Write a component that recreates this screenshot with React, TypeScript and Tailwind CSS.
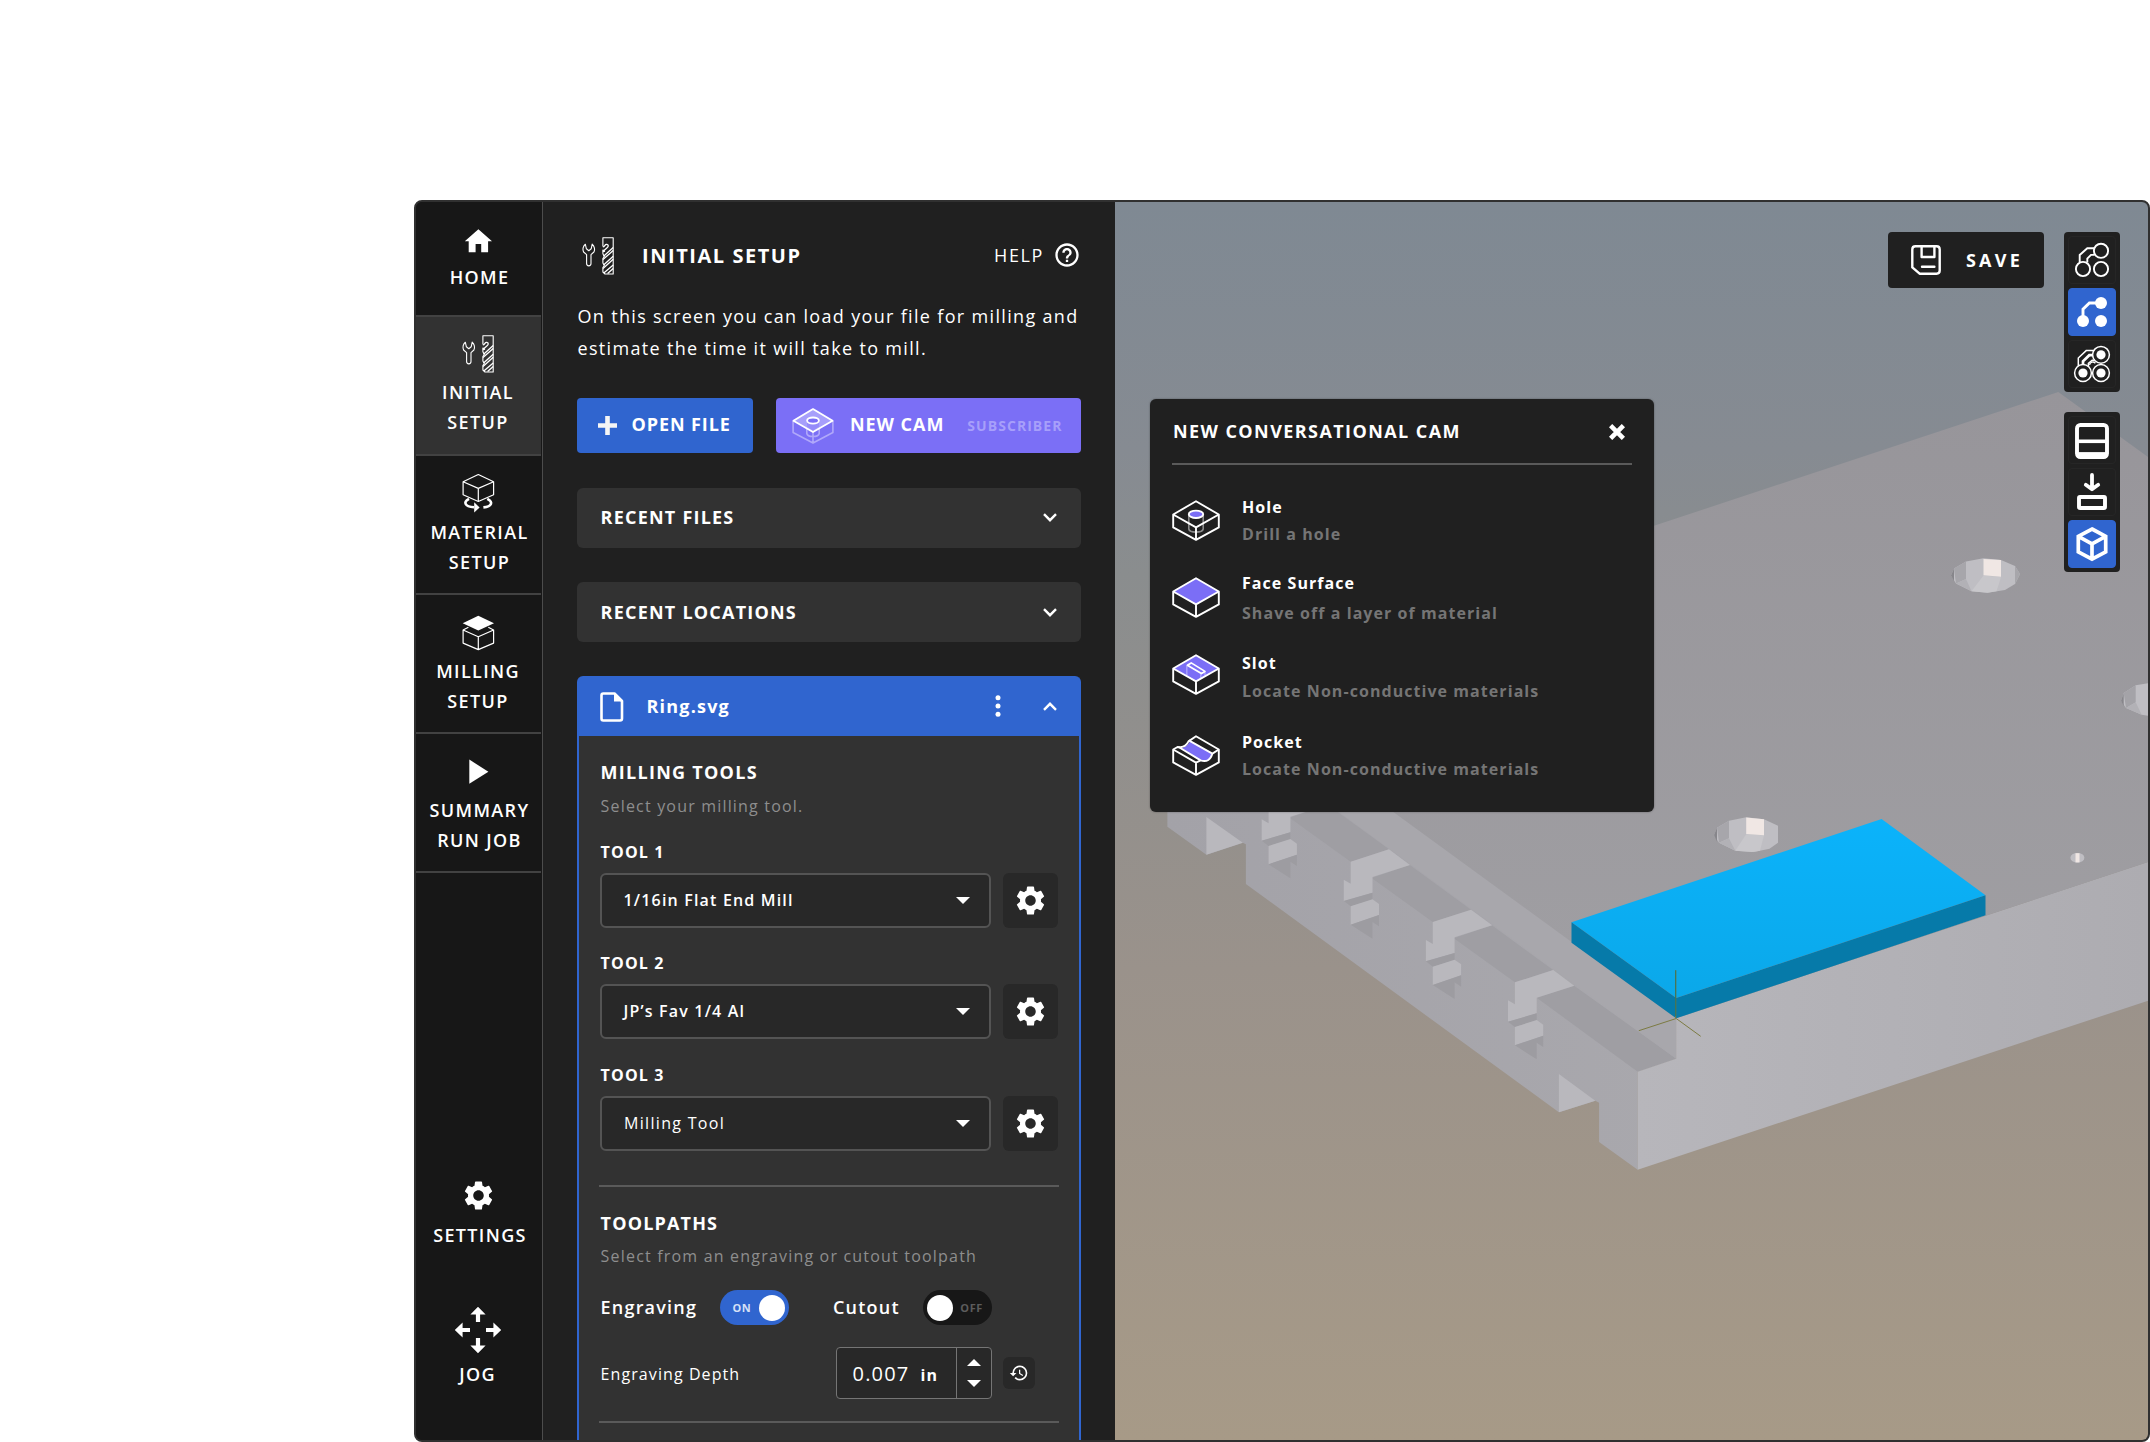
import type { ReactNode } from "react";
import { MdHelpOutline, MdHistory, MdSettings } from "react-icons/md";

/* ---------- Icons ---------- */

function MillToolsIcon({ className = "" }: { className?: string }) {
  return (
    <svg viewBox="0 0 47 47" width="47" height="47" className={className} fill="none" stroke="#fff" strokeWidth="1.1" strokeLinejoin="round">
      <path d="M10.3 12.2 C8 14 7.4 17.6 8.6 20 L11.6 22.6 V31.6 C11.6 34.6 16 34.6 16 31.6 V22.6 L18.9 20 C20.2 17.6 19.4 14 17.2 12.2 L16.2 16.8 L13.8 18.7 L11.4 16.8 Z" />
      <path d="M27.9 14.5 V5.8 H38.2 V42 H30 L27.9 40 V35.5 L29.3 33.5 L27.9 31 V26.5 L29.3 24.5 L27.9 21.8 V18 L30 19.5" />
      <path d="M27.9 14.8 C30 14.8 29.6 12 31.8 12.4 C34 13 33.4 14.8 31.8 16 L27.9 19.4 M28.6 24.2 L38.2 15.6 M28 27.6 L38.2 18.4 M28.6 33 L38.2 24.2 M28 36.4 L38.2 27.2 M28.8 41 L38.2 33 M32.6 41.6 L38.2 36.4" strokeWidth="1.3" />
    </svg>
  );
}

function HomeIcon() {
  return (
    <svg viewBox="0 0 47 47" width="47" height="47" fill="#fff">
      <path d="M23.4 13.2 L37 25.2 H33.1 V36.2 H26.2 V28 H20.6 V36.2 H13.7 V25.2 H9.8 Z" />
    </svg>
  );
}

function MaterialIcon() {
  return (
    <svg viewBox="0 0 47 47" width="47" height="47" fill="none" stroke="#fff" strokeWidth="1.2" strokeLinejoin="round">
      <path d="M23.3 5.5 L38.6 12.7 V25.7 L23.3 32.5 L8.1 25.7 V12.7 Z M8.1 12.7 L23.3 19.4 L38.6 12.7 M23.3 19.4 V32.5" />
      <path d="M14 29.8 C8 33 9.5 37.6 19 38.3" strokeWidth="2.6" />
      <path d="M32.3 29.8 C38.5 33 37 37.6 28.4 38.4" strokeWidth="2.6" />
      <path d="M19.2 33.3 L24.6 38.4 L19.2 43.6 Z" fill="#fff" stroke="none" />
    </svg>
  );
}

function MillingIcon() {
  return (
    <svg viewBox="0 0 47 47" width="47" height="47" fill="none" stroke="#fff" strokeWidth="1.2" strokeLinejoin="round">
      <path d="M23.3 7.7 L39 15.3 L23.3 22.4 L7.7 15.3 Z" fill="#fff" stroke="none" />
      <path d="M13.4 19.3 L8.1 22 V35.1 L23.3 41.6 L38.6 35.1 V22 L33.3 19.3 M8.1 22 L23.3 28.8 L38.6 22 M23.3 28.8 V41.6" />
    </svg>
  );
}

function PlayIcon() {
  return (
    <svg viewBox="0 0 47 47" width="47" height="47" fill="#fff">
      <path d="M14.3 12.6 L33.4 24.7 L14.3 36.8 Z" />
    </svg>
  );
}

function JogIcon() {
  const arrow = "M0 -23.2 L7.6 -15.4 H2.1 V-8 H-2.1 V-15.4 H-7.6 Z";
  return (
    <svg viewBox="-24 -24 48 48" width="48" height="48" fill="#fff">
      <path d={arrow} />
      <path d={arrow} transform="rotate(90)" />
      <path d={arrow} transform="rotate(180)" />
      <path d={arrow} transform="rotate(270)" />
    </svg>
  );
}

function Chevron({ up = false }: { up?: boolean }) {
  return (
    <svg viewBox="0 0 14 9" width="14" height="9" fill="none" stroke="#fff" strokeWidth="2.4">
      <path d={up ? "M1 7.8 L7 1.8 L13 7.8" : "M1 1.2 L7 7.2 L13 1.2"} />
    </svg>
  );
}

function Caret({ up = false }: { up?: boolean }) {
  return (
    <svg viewBox="0 0 14 7" width="14" height="7" fill="#fff">
      <path d={up ? "M0 7 L7 0 L14 7 Z" : "M0 0 H14 L7 7 Z"} />
    </svg>
  );
}

const CUBE = "M24 1.3 L46.8 14.5 V27.4 L24 39.8 L1.2 27.4 V14.5 Z M1.2 14.5 L24 27.4 L46.8 14.5 M24 27.4 V39.8";

function HoleIcon() {
  return (
    <svg viewBox="0 0 48 41" width="48" height="41" fill="none" stroke="#fff" strokeWidth="1.9" strokeLinejoin="round">
      <path d="M16.8 14.5 V29 C17.6 33.2 30.4 33.2 31.2 29 V14.5" stroke="#8a8a8a" strokeWidth="1.6" />
      <path d={CUBE} />
      <ellipse cx="24" cy="14.3" rx="7.2" ry="3.7" fill="#7b6ef6" />
    </svg>
  );
}

function FaceIcon() {
  return (
    <svg viewBox="0 0 48 41" width="48" height="41" fill="none" stroke="#fff" strokeWidth="1.9" strokeLinejoin="round">
      <path d="M24 1.3 L46.8 14.5 L24 27.4 L1.2 14.5 Z" fill="#7b6ef6" stroke="none" />
      <path d={CUBE} />
    </svg>
  );
}

function SlotIcon() {
  return (
    <svg viewBox="0 0 48 41" width="48" height="41" fill="none" stroke="#fff" strokeWidth="1.9" strokeLinejoin="round">
      <path d="M24 1.3 L46.8 14.5 L24 27.4 L1.2 14.5 Z" fill="#7b6ef6" stroke="none" />
      <path d="M14.8 11.5 V21.5 M33 18.5 V21.6 M28.8 20 V24" stroke="#a9a0fb" strokeWidth="1.5" />
      <path d={CUBE} />
      <path d="M19.2 8.9 L33 17.4 L29.4 19.6 L15.4 11.2 Z" strokeWidth="1.7" />
    </svg>
  );
}

function PocketIcon() {
  return (
    <svg viewBox="0 0 48 41" width="48" height="41" fill="none" stroke="#fff" strokeWidth="1.9" strokeLinejoin="round">
      <path d="M18.2 6.2 L40 18.8 C38.5 24 36 27.5 28.5 25.5 L8.5 13.2 C14 12.5 15.5 9.5 18.2 6.2 Z" fill="#7b6ef6" stroke="none" />
      <path d="M24 1.3 L46.8 14.5 V27.4 L24 39.8 L1.2 27.4 V14.5 L5.5 12 L8.5 12.2 C13.5 12 15 9.5 16.5 6.4 Z" />
      <path d="M16.8 5.4 L40.4 18.6 L46.8 14.5 M40.4 18.6 C38.8 24.5 35 27.4 28.6 25.4 L7 12.2 M1.2 14.5 L24 27.6 L28.6 25.4 M24 27.6 V39.8" />
    </svg>
  );
}

function NewCamIcon() {
  return (
    <svg viewBox="0 0 42 36" width="42" height="36" fill="none" stroke="#fff" strokeWidth="1.8" strokeLinejoin="round">
      <path d="M1.1 13 V24.5 L21 35 L40.9 24.5 V13 M21 24 V35 M14.8 14 V25.5 C15.5 29.5 26.5 29.5 27.2 25.5 V14" stroke="#b0a8fa" strokeWidth="1.6" />
      <path d="M21 1.1 L40.6 12.8 L21 24 L1.4 12.8 Z" fill="#a79ffb" />
      <path d="M15.1 13 V18.8 L21 22.4 L26.9 18.8 V13 Z" fill="#958bf9" stroke="none" />
      <ellipse cx="21" cy="12.6" rx="5.9" ry="3.1" fill="#7b6ef6" />
    </svg>
  );
}

function SaveIcon() {
  return (
    <svg viewBox="0 0 30 30" width="30" height="30" fill="none" stroke="#fff" strokeWidth="2.4" strokeLinejoin="round" strokeLinecap="round">
      <path d="M4.5 1.3 H25.5 Q28.7 1.3 28.7 4.5 V25.5 Q28.7 28.7 25.5 28.7 H8.6 L1.3 22.4 V4.5 Q1.3 1.3 4.5 1.3 Z" />
      <path d="M10.6 1.8 V12 H23.4 V1.8 M11 21.7 H23.4" />
    </svg>
  );
}

/* ---------- Left navigation ---------- */

function NavItem({ icon, lines, active = false, className, textClass }: { icon: ReactNode; lines: string[]; active?: boolean; className: string; textClass: string }) {
  return (
    <div className={`flex shrink-0 flex-col items-center border-b-2 border-[#424242] text-[18px] font-semibold leading-[30px] tracking-[1.35px] ${active ? "bg-[#323232]" : ""} ${className}`}>
      <div className="h-[47px] w-[47px]">{icon}</div>
      <div className={`flex flex-col items-center ${textClass}`}>
        {lines.map((l) => (
          <span key={l}>{l}</span>
        ))}
      </div>
    </div>
  );
}

function Sidebar() {
  return (
    <nav className="flex w-[127px] shrink-0 flex-col border-r border-[#4c4c4c] bg-[#171717] pr-px">
      <NavItem icon={<HomeIcon />} lines={["HOME"]} className="h-[115px] pt-[14px]" textClass="-mt-px pl-[2px]" />
      <NavItem icon={<MillToolsIcon />} lines={["INITIAL", "SETUP"]} active className="h-[139px] pt-[13px]" textClass="pr-px" />
      <NavItem icon={<MaterialIcon />} lines={["MATERIAL", "SETUP"]} className="h-[139px] pt-[13px]" textClass="mt-px pl-[2px]" />
      <NavItem icon={<MillingIcon />} lines={["MILLING", "SETUP"]} className="h-[139px] pt-[13px]" textClass="mt-px pr-px" />
      <NavItem icon={<PlayIcon />} lines={["SUMMARY", "RUN JOB"]} className="h-[139px] pt-[13px]" textClass="mt-px pl-[2px]" />
      <div className="mt-auto flex flex-col items-center pb-[51px] text-[18px] font-semibold leading-[30px] tracking-[1.35px]">
        <MdSettings size={35} color="#fff" />
        <span className="mt-[7px] pl-[3px]">SETTINGS</span>
        <div className="mt-[56px] mb-[5px] pr-px"><JogIcon /></div>
        <span className="pr-[2px]">JOG</span>
      </div>
    </nav>
  );
}

/* ---------- Setup panel ---------- */

function Accordion({ title, className }: { title: string; className: string }) {
  return (
    <div className={`flex h-[60px] shrink-0 items-center justify-between rounded-md bg-[#323232] pl-[23.6px] pr-[24px] ${className}`}>
      <span className="text-[18px] font-bold tracking-[1.22px]">{title}</span>
      <Chevron />
    </div>
  );
}

function ToolSelect({ label, value, placeholder = false }: { label: string; value: string; placeholder?: boolean }) {
  return (
    <div>
      <div className="pt-px pl-[0.6px] text-[16px] font-bold leading-6 tracking-[1.15px]">{label}</div>
      <div className="mt-[9px] flex gap-3">
        <div className="flex h-[55px] w-[391px] items-center justify-between rounded-[6px] border-2 border-[#545454] bg-[#282828] pl-[21.5px] pr-[19px]">
          <span className={placeholder ? "pb-px pl-[0.6px] text-[16px] tracking-[1.3px]" : "pb-px text-[16px] font-semibold tracking-[1.18px]"}>{value}</span>
          <Caret />
        </div>
        <div className="flex h-[55px] w-[55px] items-center justify-center rounded-[6px] bg-[#282828]">
          <MdSettings size={35} color="#fff" />
        </div>
      </div>
    </div>
  );
}

function Toggle({ on }: { on: boolean }) {
  return (
    <div className={`flex h-[35px] w-[69px] items-center justify-between rounded-full px-[4.5px] text-[11px] font-bold ${on ? "bg-[#3065cf] pl-[12.5px]" : "bg-[#171717] pr-[8.5px]"}`}>
      {on && <span className="pt-[2px] tracking-[0.6px] text-[#d5e0f6]">ON</span>}
      <span className="h-[26px] w-[26px] rounded-full bg-white" />
      {!on && <span className="pt-[2px] tracking-[0.6px] text-[#5c5c5c]">OFF</span>}
    </div>
  );
}

function Rule() {
  return <div className="-ml-px h-[2px] w-[460px] bg-[#5a5a5a]" />;
}

function SetupPanel() {
  return (
    <section className="flex w-[572px] shrink-0 flex-col overflow-hidden bg-[#202020] pl-[34px] pr-[34px]">
      <div className="mt-[33px] flex h-10 shrink-0 items-center">
        <MillToolsIcon className="-ml-[2.5px]" />
        <h1 className="ml-[20.5px] pt-[1px] text-[20px] font-bold leading-8 tracking-[1.55px]">INITIAL SETUP</h1>
        <span className="ml-auto pt-px text-[18px] tracking-[1.6px]">HELP</span>
        <MdHelpOutline size={28} color="#fff" className="ml-[9px]" />
      </div>
      <p className="mt-[25px] whitespace-nowrap pl-[0.5px] text-[18px] leading-8 tracking-[1.33px]">
        On this screen you can load your file for milling and
        <br />
        estimate the time it will take to mill.
      </p>
      <div className="mt-[34px] mb-[34.5px] flex h-[55px] shrink-0 justify-between">
        <div className="flex w-[176px] items-center rounded-[4px] bg-[#3065cf] pl-[21px] text-[18px] font-bold tracking-[0.9px]">
          <svg viewBox="0 0 19 19" width="19" height="19" fill="none" stroke="#f5f5f5" strokeWidth="4.6">
            <path d="M9.5 0 V19 M0 9.5 H19" />
          </svg>
          <span className="ml-[14.5px] pb-[2px]">OPEN FILE</span>
        </div>
        <div className="flex w-[305px] items-center rounded-[4px] bg-[#7b6ff6] pl-[16px] text-[18px] font-bold tracking-[0.95px]">
          <NewCamIcon />
          <span className="ml-[16px] pb-[2px]">NEW CAM</span>
          <span className="ml-[23px] text-[14px] tracking-[1.05px] text-[#a79ffa]">SUBSCRIBER</span>
        </div>
      </div>
      <Accordion title="RECENT FILES" className="mb-[34.5px]" />
      <Accordion title="RECENT LOCATIONS" className="mb-[34px]" />
      <div className="flex grow flex-col rounded-t-md border-2 border-b-0 border-[#3065cf] bg-[#323232]">
        <div className="flex h-[58px] shrink-0 items-center bg-[#3065cf] pb-px pl-[21px] pr-[22px]">
          <svg viewBox="0 0 24 30" width="24" height="30" fill="none" stroke="#fff" strokeWidth="2.6" strokeLinejoin="round">
            <path d="M3.3 1.5 H14.5 L22 9 V26.5 Q22 28.5 20 28.5 H3.3 Q1.5 28.5 1.5 26.5 V3.5 Q1.5 1.5 3.3 1.5 Z" />
            <path d="M14 1.5 V9.6 H22 Z" fill="#fff" stroke="none" />
          </svg>
          <span className="ml-[22.5px] text-[18px] font-bold tracking-[1.2px]">Ring.svg</span>
          <svg viewBox="0 0 6 24" width="6" height="24" fill="#fff" className="mb-px ml-auto">
            <circle cx="3" cy="3.8" r="2.5" />
            <circle cx="3" cy="12" r="2.5" />
            <circle cx="3" cy="20.2" r="2.5" />
          </svg>
          <span className="ml-[42px]"><Chevron up /></span>
        </div>
        <div className="flex flex-col pl-[21px]">
          <h2 className="mt-[24px] pl-[0.6px] text-[18px] font-bold leading-6 tracking-[1.27px]">MILLING TOOLS</h2>
          <p className="mt-[9.5px] mb-[21.5px] pl-[0.6px] text-[16px] leading-6 tracking-[1.18px] text-[#8e8e8e]">Select your milling tool.</p>
          <ToolSelect label="TOOL 1" value="1/16in Flat End Mill" />
          <div className="h-[22px]" />
          <ToolSelect label="TOOL 2" value="JP’s Fav 1/4 Al" />
          <div className="h-[23px]" />
          <ToolSelect label="TOOL 3" value="Milling Tool" placeholder />
          <div className="h-[34px]" />
          <Rule />
          <h2 className="mt-[24px] pl-[0.6px] text-[18px] font-bold leading-6 tracking-[1.17px]">TOOLPATHS</h2>
          <p className="mt-[9px] mb-[22px] pl-[0.6px] text-[16px] leading-6 tracking-[1.19px] text-[#8e8e8e]">Select from an engraving or cutout toolpath</p>
          <div className="flex h-[35px] items-center text-[18px] font-semibold tracking-[1.2px]">
            <span className="w-[120px] pl-[0.6px]">Engraving</span>
            <Toggle on />
            <span className="ml-[44px] w-[89.5px]">Cutout</span>
            <Toggle on={false} />
          </div>
          <div className="mt-[22px] mb-[22px] flex h-[52px] items-center">
            <span className="w-[235.5px] pt-px pl-[0.6px] text-[16px] tracking-[1.08px]">Engraving Depth</span>
            <div className="flex h-[52px] w-[156px] rounded-[4px] border border-[#757575] bg-[#282828]">
              <div className="flex grow items-baseline pl-[16px] pt-[11px]">
                <span className="text-[20px] leading-[30px] tracking-[1.2px]">0.007</span>
                <span className="ml-[11px] text-[16px] font-bold tracking-[1.1px]">in</span>
              </div>
              <div className="flex w-[35px] flex-col items-center justify-center gap-[14px] border-l border-[#757575]">
                <Caret up />
                <Caret />
              </div>
            </div>
            <div className="ml-[11.5px] flex h-8 w-8 items-center justify-center rounded-[6px] bg-[#282828]">
              <MdHistory size={20} color="#fff" />
            </div>
          </div>
          <Rule />
        </div>
      </div>
    </section>
  );
}

/* ---------- 3D scene ---------- */

const SLOT_STEPS = [0, 1, 2, 3];

function Slot({ step }: { step: number }) {
  return (
    <g transform={`translate(${-82.1 * step} ${-60.33 * step})`}>
      <path d="M1453.8 938.3 L1491.9 925.3 L1553.2 970 L1514.9 982.3 Z" fill="#9f9ea3" />
      <path d="M1514.9 982.3 L1553.2 970 L1574.2 985.7 L1536.7 997.7 V1013.3 L1508 1021.7 V1000.3 L1514.9 1004.3 Z" fill="#b9b8bd" />
      <path d="M1508 1021.7 L1536.7 1013.3 V1020.5 L1514.9 1027 Z" fill="#9d9ca1" />
      <path d="M1514.9 1027 L1536.7 1020 L1543.2 1024.7 V1035.7 L1514.9 1045.3 Z" fill="#b9b8bd" />
      <path d="M1514.9 1045.3 L1543.2 1035.7 V1047 L1536.7 1042.7 V1059.3 Z" fill="#9d9ca1" />
    </g>
  );
}

function Scene() {
  return (
    <svg viewBox="1115 202 1033 1238" width="1033" height="1238" className="block">
      <defs>
        <linearGradient id="sky" x1="0" y1="0" x2="0" y2="1">
          <stop offset="0" stopColor="#7f8993" />
          <stop offset="0.2" stopColor="#868b92" />
          <stop offset="0.3" stopColor="#8a8d8e" />
          <stop offset="0.62" stopColor="#9a928b" />
          <stop offset="1" stopColor="#a79a87" />
        </linearGradient>
        <linearGradient id="deck" x1="0" y1="0" x2="0" y2="1">
          <stop offset="0" stopColor="#97959a" />
          <stop offset="1" stopColor="#a09fa3" />
        </linearGradient>
        <linearGradient id="front" x1="0" y1="0" x2="1" y2="0">
          <stop offset="0" stopColor="#b7b6bb" />
          <stop offset="1" stopColor="#adacb1" />
        </linearGradient>
        <linearGradient id="side" x1="0" y1="0" x2="1" y2="0">
          <stop offset="0" stopColor="#a3a2a8" />
          <stop offset="1" stopColor="#a9a8ad" />
        </linearGradient>
        <linearGradient id="stock" x1="0" y1="0" x2="0" y2="1">
          <stop offset="0" stopColor="#0bb3fb" />
          <stop offset="1" stopColor="#0ba8e9" />
        </linearGradient>
      </defs>
      <rect x="1115" y="202" width="1033" height="1238" fill="url(#sky)" />

      {/* bed: end face, ledges and slots */}
      <path d="M1167.4 640 V826.7 L1206.4 854.7 L1242.8 842.7 L1245.9 844.3 V884 L1558.9 1112.3 L1595.3 1100.7 L1599.1 1102.7 V1142 L1637.7 1169.7 V1071.7 L1676.2 1058.7 V1018 L1240 640 Z" fill="url(#side)" />
      <path d="M1206.4 817 L1242.8 842.7 L1206.4 854.7 Z M1558.9 1074 L1595.3 1100.7 L1558.9 1112.3 Z" fill="#b9b8bd" />
      <path d="M1536.7 997.7 L1574.2 985.7 L1676.2 1058.7 L1637.7 1071.7 Z" fill="#9f9ea3" />
      {SLOT_STEPS.map((s) => (
        <Slot key={s} step={s} />
      ))}
      <path d="M1200 671 L1676.2 1018 V1058.7 L1200 710.5 Z" fill="#a8a7ac" />
      <path d="M1637.7 1071.7 L1676.2 1058.7 V1018 L2148 862 V1000.7 L1637.7 1169.7 Z" fill="url(#front)" />
      <path d="M2058.3 392 L2148 457 V862 L1676.2 1018.3 L1200 671 V676 Z" fill="url(#deck)" />

      {/* bolt holes */}
      <g>
        <path d="M1951 575.5 L1954 568.5 L1966 561.5 L1983.5 558.3 L2001 560 L2015 566 L2020 574 L2015 584 L2005 590 L1987.5 592.7 L1971.5 591.3 L1956 583.5 Z" fill="#bfbec3" />
        <path d="M1951 575.5 L1954 568.5 V581 Z" fill="#87868b" />
        <path d="M1954 568.5 L1966 561.5 V579 L1956 583.5 Z" fill="#a7a6ab" />
        <path d="M1956 583.5 L1966 579 L1971.5 591.3 Z" fill="#b2b1b6" />
        <path d="M1983.5 575.5 L2001 577 L1996.5 591.3 L1987.5 592.7 L1971.5 591.3 Z" fill="#c8c7cb" />
        <path d="M2015 566 L2020 574 L2015 584 Z" fill="#a7a6ab" />
        <path d="M1983.5 559 L2001 560 V576.8 L1983.5 575.3 Z" fill="#f0e7e4" />
      </g>
      <g>
        <path d="M1714 835 L1717 827.7 L1729 820.7 L1746.2 817.3 L1764 819.3 L1778 825.7 V842.7 L1769.5 848.7 L1754 852 L1735.3 850.7 L1719 842.7 Z" fill="#bfbec3" />
        <path d="M1714 835 L1717 827.7 V841.5 Z" fill="#87868b" />
        <path d="M1717 827.7 L1729 820.7 V838.3 L1719 842.7 Z" fill="#a7a6ab" />
        <path d="M1719 842.7 L1729 838.3 L1735.3 850.7 Z" fill="#b2b1b6" />
        <path d="M1746.2 834.3 L1764 835.3 L1760 850.7 L1752 852 L1735.3 850.7 Z" fill="#c8c7cb" />
        <path d="M1746.2 817.5 L1764 819.3 V835.3 L1746.2 834 Z" fill="#f0e7e4" />
      </g>
      <g>
        <path d="M2121 700.7 L2123.7 693 L2135.7 685.3 L2148 683.3 V715.7 L2141.7 714.7 L2126 708 Z" fill="#bfbec3" />
        <path d="M2121 700.7 L2123.7 693 V706 Z" fill="#87868b" />
        <path d="M2123.7 693 L2135.7 685.3 V702.3 L2126 708 Z" fill="#a4a3a8" />
        <path d="M2126 708 L2135.7 702.3 L2141.7 714.7 Z" fill="#b2b1b6" />
      </g>
      <ellipse cx="2077.4" cy="857.8" rx="7" ry="4.9" fill="#bfbec3" />
      <path d="M2075.5 853.2 H2079.5 V862.4 H2075.5 Z" fill="#f0e7e4" />

      {/* stock */}
      <path d="M1571.5 922.3 L1881.6 819 L1985.5 895.3 L1676.2 998 Z" fill="url(#stock)" />
      <path d="M1571.5 922.3 L1676.2 998 L1985.5 895.3 V915.3 L1676.2 1018.3 L1571.5 942.7 Z" fill="#067aa9" />

      {/* origin axes */}
      <path d="M1675.7 970.3 V1018.3 M1638.8 1030.7 L1676.2 1018.5 M1700.7 1036.3 L1676.2 1018.5" stroke="#7c7b42" strokeWidth="1" fill="none" />
      <path d="M1675.7 970.3 V1016" stroke="#3f7355" strokeWidth="1" fill="none" />
    </svg>
  );
}

/* ---------- Overlays on the scene ---------- */

function CamOption({ icon, title, text, className, iconClass, textClass }: { icon: ReactNode; title: string; text: string; className: string; iconClass: string; textClass: string }) {
  return (
    <div className={`flex gap-[22px] ${className}`}>
      <div className={iconClass}>{icon}</div>
      <div className="text-[16px] font-bold leading-6 tracking-[1.06px]">
        <div>{title}</div>
        <div className={`text-[#757575] ${textClass}`}>{text}</div>
      </div>
    </div>
  );
}

function CamDialog() {
  return (
    <div className="absolute top-[197px] left-[35px] flex h-[413px] w-[504px] flex-col rounded-[6px] bg-[#202020] px-[22px] shadow-[0_0_2px_rgba(0,0,0,0.4)]">
      <div className="flex h-[64px] shrink-0 items-center justify-between pr-[7px] pb-px pl-px">
        <h2 className="pt-px text-[18px] font-bold tracking-[1.42px]">NEW CONVERSATIONAL CAM</h2>
        <svg viewBox="0 0 16 16" width="16" height="16" fill="none" stroke="#fff" strokeWidth="4.6" className="mt-[2px]">
          <path d="M1.6 1.6 L14.4 14.4 M14.4 1.6 L1.6 14.4" />
        </svg>
      </div>
      <div className="h-[2px] shrink-0 bg-[#5a5a5a]" />
      <CamOption className="mt-[30px] h-[76px]" iconClass="pt-[5px]" textClass="mt-[3px]" icon={<HoleIcon />} title="Hole" text="Drill a hole" />
      <CamOption className="h-[80px]" iconClass="pt-[6px]" textClass="mt-[6px]" icon={<FaceIcon />} title="Face Surface" text="Shave off a layer of material" />
      <CamOption className="h-[79px]" iconClass="pt-[3px]" textClass="mt-[4px]" icon={<SlotIcon />} title="Slot" text="Locate Non-conductive materials" />
      <CamOption className="h-[60px]" iconClass="pt-[5px]" textClass="mt-[3px]" icon={<PocketIcon />} title="Pocket" text="Locate Non-conductive materials" />
    </div>
  );
}

function ToolButton({ active = false, children }: { active?: boolean; children: ReactNode }) {
  return (
    <div className={`h-12 w-12 rounded-[4px] border ${active ? "border-[#3065cf] bg-[#3065cf]" : "border-[#262626]"}`}>
      <svg viewBox="1 1 46 46" width="46" height="46" fill="none" stroke="#fff" strokeLinejoin="round">
        {children}
      </svg>
    </div>
  );
}

function ViewControls() {
  return (
    <div className="absolute top-[30px] right-[28px] flex items-start gap-5">
      <div className="flex h-14 w-[156px] items-center rounded-[4px] bg-[#202020] pl-[23px] text-[18px] font-bold tracking-[3.2px]">
        <SaveIcon />
        <span className="ml-[25px] pt-px">SAVE</span>
      </div>
      <div className="flex flex-col gap-5">
        <div className="flex flex-col gap-1 rounded-[4px] bg-[#202020] p-1">
          <ToolButton>
            <g strokeWidth="1.9">
              <path d="M11.7 26.5 V19 L19.3 12.2 H26 M19.3 26.5 V22.6 L23 18.9 H26.6" strokeLinejoin="miter" />
              <circle cx="33" cy="14.8" r="7.1" />
              <circle cx="15" cy="33" r="7.1" />
              <circle cx="33" cy="33" r="7.1" />
            </g>
          </ToolButton>
          <ToolButton active>
            <path d="M15 33 V21.2 L21.4 15 H33" strokeWidth="2.9" strokeLinejoin="miter" />
            <g fill="#fff" stroke="none">
              <circle cx="33" cy="15" r="6" />
              <circle cx="15" cy="33" r="6" />
              <circle cx="33" cy="33" r="6" />
            </g>
          </ToolButton>
          <ToolButton>
            <path d="M10.3 26 V18 L18.2 10.6 H26 M20.4 27 V23.4 L24.2 20.2 H27" strokeWidth="1.5" strokeLinejoin="miter" />
            <path d="M15 26 V21.4 L21.3 15.2 H26" strokeWidth="2.7" strokeLinejoin="miter" />
            <path d="M21.5 24.8 A3.4 3.4 0 0 1 27.4 23.2" strokeWidth="1.4" />
            <g fill="#202020" strokeWidth="1.5">
              <circle cx="33" cy="14.8" r="8.4" />
              <circle cx="15" cy="33" r="8.4" />
              <circle cx="33" cy="33" r="8.4" />
            </g>
            <g fill="#fff" stroke="none">
              <circle cx="33" cy="14.8" r="4.6" />
              <circle cx="15" cy="33" r="4.6" />
              <circle cx="33" cy="33" r="4.6" />
            </g>
          </ToolButton>
        </div>
        <div className="flex flex-col gap-1 rounded-[4px] bg-[#202020] p-1">
          <ToolButton>
            <rect x="9" y="9" width="30" height="32" rx="3.4" strokeWidth="3.9" />
            <path d="M9 25.3 H39" strokeWidth="3.6" />
            <path d="M9.5 38.8 H38.5" strokeWidth="5.4" />
          </ToolButton>
          <ToolButton>
            <path d="M24 7 V21 M17.8 16.8 L24 21.3 L30.2 16.8" strokeWidth="3.8" strokeLinecap="round" />
            <rect x="11" y="29" width="26" height="11" rx="1" strokeWidth="3.9" />
          </ToolButton>
          <ToolButton active>
            <path d="M24 9 L37.7 16.3 V31.8 L24 39.2 L10.3 31.8 V16.3 Z M10.3 16.3 L24 23.8 L37.7 16.3 M24 23.8 V39.2" strokeWidth="3.7" strokeLinejoin="miter" />
          </ToolButton>
        </div>
      </div>
    </div>
  );
}

export default function App() {
  return (
    <div className="h-[1442px] w-[2150px] overflow-hidden bg-white pt-[200px] pl-[414px] font-['Open_Sans',sans-serif] text-white">
      <div className="flex h-[1242px] w-[1736px] overflow-hidden rounded-[8px] border-2 border-[#303030] bg-[#202020]">
        <Sidebar />
        <SetupPanel />
        <main className="relative h-[1238px] w-[1033px] shrink-0">
          <Scene />
          <CamDialog />
          <ViewControls />
        </main>
      </div>
    </div>
  );
}
